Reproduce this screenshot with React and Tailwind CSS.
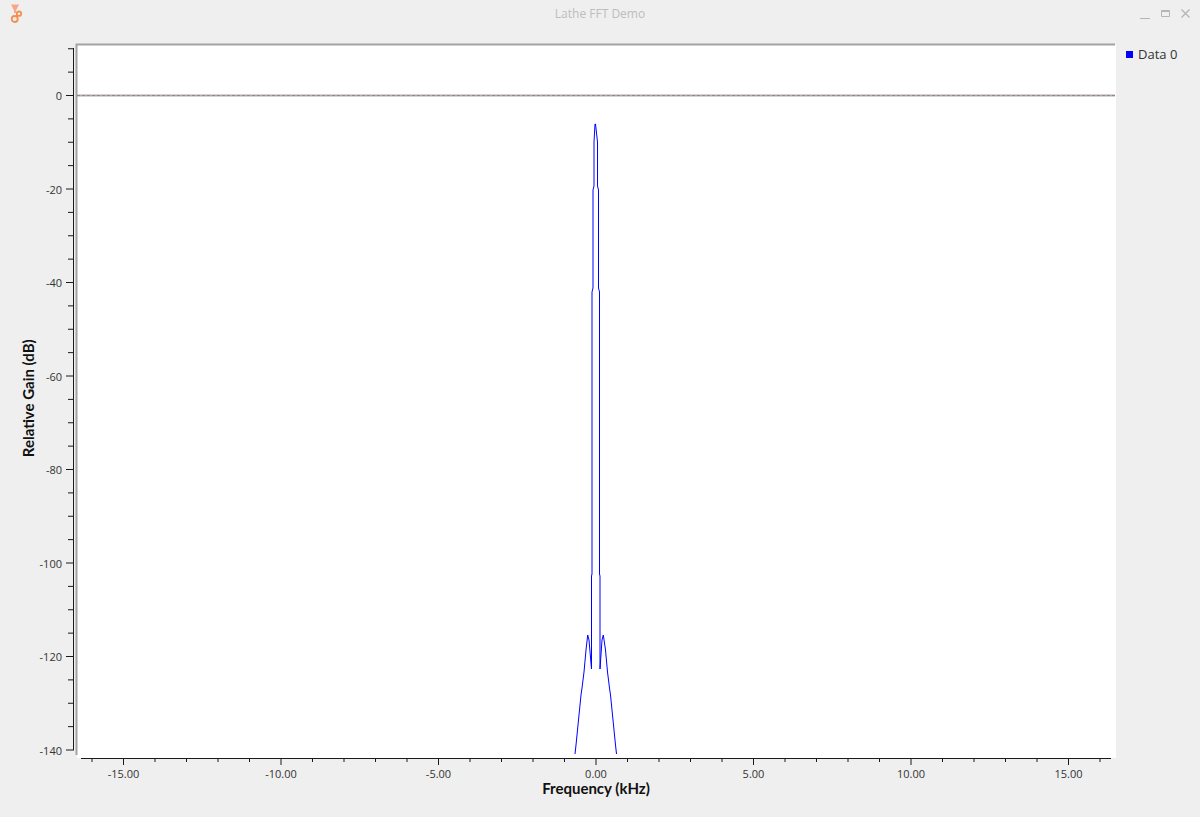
import React from 'react';

const yLabels = [0, -20, -40, -60, -80, -100, -120, -140];
const xLabels = ['-15.00', '-10.00', '-5.00', '0.00', '5.00', '10.00', '15.00'];

const yPos = (db) => 95.5 - db * 4.675;
const xPos = (khz) => 596 + khz * 31.5;

// tick positions, every 5 dB and every 1 kHz
const yTicks = [];
for (let db = 10; db >= -140; db -= 5) yTicks.push(db);
const xTicks = [];
for (let k = -16; k <= 16; k++) xTicks.push(k);

const trace = [
  [575, 754], [576, 745], [578.5, 720], [581, 695], [582, 688], [584, 672], [586, 650], [587.7, 635],
  [589, 640], [591.5, 669], [591.5, 576], [592, 574], [592, 292], [593, 288], [593, 190], [594, 186], [594, 142], [595, 124],
  [595.5, 124], [597.5, 142], [597.5, 186], [598.5, 190], [598.5, 288], [599.5, 292], [599.5, 574], [600, 576], [600, 669],
  [602, 640], [603.3, 635], [605.5, 650], [607.5, 672], [609.5, 688], [610.5, 695], [613, 720], [615.5, 745], [616.5, 754],
].map((p) => p.join(',')).join(' ');

const Plot = () => (
  <svg viewBox="38 40 1082 740" className="w-[1082px] h-[740px] shrink-0">
    <rect x="77" y="45" width="1039" height="713" fill="#ffffff" />
    <path d="M76.5 755V44.5H1115" fill="none" stroke="#a3a3a3" strokeWidth="2" />
    <line x1="77" y1="95.5" x2="1115" y2="95.5" stroke="#b8a8a8" strokeWidth="2" />
    <line x1="77" y1="95.5" x2="1115" y2="95.5" stroke="#8c8c8c" strokeDasharray="3 2" />

    {/* y axis */}
    <line x1="73.5" y1="48" x2="73.5" y2="750.5" stroke="#1a1a1a" />
    {yTicks.map((db) => (
      <line key={db} x1={db % 20 === 0 ? 66 : 68} y1={yPos(db)} x2="73" y2={yPos(db)} stroke="#1a1a1a" />
    ))}
    {yLabels.map((db) => (
      <text key={db} x="62" y={yPos(db) + 4.5} textAnchor="end" fontSize="11" fill="#333333" fontFamily="'Open Sans', sans-serif">{db}</text>
    ))}

    {/* x axis */}
    <line x1="81" y1="758.5" x2="1111" y2="758.5" stroke="#1a1a1a" />
    {xTicks.map((k) => (
      <line key={k} x1={xPos(k)} y1="759" x2={xPos(k)} y2={k % 5 === 0 ? 765 : 762} stroke="#1a1a1a" />
    ))}
    {xLabels.map((label) => (
      <text key={label} x={xPos(parseFloat(label))} y="778" textAnchor="middle" fontSize="11" fill="#333333" fontFamily="'Open Sans', sans-serif">{label}</text>
    ))}

    <polyline points={trace} fill="none" stroke="#0000ff" strokeWidth="1" />
  </svg>
);

export default function App() {
  return (
    <div className="w-[1200px] h-[817px] bg-[#efefef] flex flex-col overflow-hidden font-['Open_Sans',sans-serif]">
      {/* Title bar */}
      <div className="h-[28px] grid grid-cols-[1fr_auto_1fr] items-center pl-[9px] pr-[8px] shrink-0">
        <svg width="16" height="22" viewBox="0 0 16 22" fill="none" stroke="#f4904f" strokeWidth="1.8">
          <path d="M2 1.5h8L7 7.5H5z" fill="#f8a68a" stroke="none" />
          <path d="M6 7v3" stroke="#f8a68a" strokeWidth="2" />
          <circle cx="10" cy="10.7" r="2.2" />
          <circle cx="5.7" cy="16" r="3" />
          <path d="M8.2 12.5l-1 1.2" />
        </svg>
        <span className="text-[12px] text-[#bdbdbd] ml-[-1px]">Lathe FFT Demo</span>
        <div className="flex items-center justify-end gap-[8px] text-[#b5b5b5]">
          <svg width="12" height="12" viewBox="0 0 12 12" stroke="currentColor" fill="none"><path d="M0 10.5h10" /></svg>
          <svg width="12" height="12" viewBox="0 0 12 12" stroke="currentColor" fill="none"><path d="M1.5 2.5h8v6h-8zM1.5 3.5h8" /></svg>
          <svg width="12" height="12" viewBox="0 0 12 12" stroke="currentColor" strokeWidth="1.3" fill="none"><path d="M1.5 1.5l8 8M9.5 1.5l-8 8" /></svg>
        </div>
      </div>

      <div className="flex">
        {/* Y axis title */}
        <div className="w-[38px] h-[740px] pl-[18px] flex items-center justify-center shrink-0">
          <span className="-rotate-90 whitespace-nowrap text-[15px] font-bold text-[#111111] font-['Lato',sans-serif]">Relative Gain (dB)</span>
        </div>
        <div className="flex flex-col items-start mt-[12px]">
          <Plot />
        </div>
        {/* Legend */}
        <div className="flex items-center gap-[5px] pl-[6px] pt-[17px] h-fit">
          <div className="w-[7px] h-[7px] bg-[#0000ff]" />
          <span className="text-[13px] text-[#333333] leading-[18px]">Data 0</span>
        </div>
      </div>

      {/* X axis title */}
      <div className="text-center text-[15px] font-bold text-[#111111] font-['Lato',sans-serif] mt-[-3px] pr-[8px]">Frequency (kHz)</div>
    </div>
  );
}
